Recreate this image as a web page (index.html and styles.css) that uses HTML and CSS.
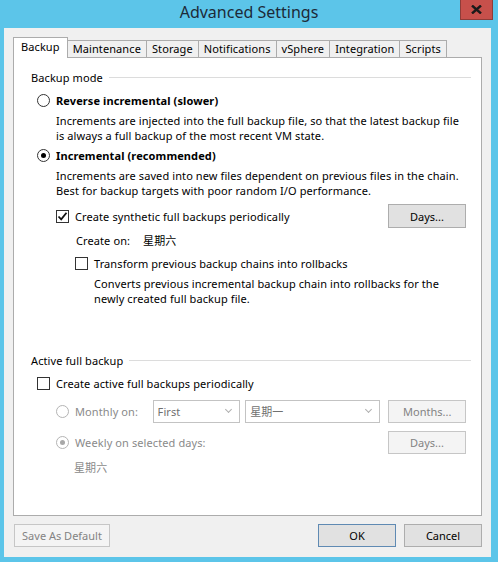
FILE: index.html
```html
<!DOCTYPE html>
<html lang="en">
<head>
  <meta charset="UTF-8" />
  <title>Advanced Settings</title>
  <link rel="stylesheet" href="styles.css">
</head>
<body>
  <div class="window">
    <div class="titlebar">
      <div class="title">Advanced Settings</div>
      <div class="close">
        <svg width="11" height="9" viewBox="0 0 11 9"><path d="M1 0.5 L10 8.5 M10 0.5 L1 8.5" stroke="#1a1a1a" stroke-width="2.4"/></svg>
      </div>
    </div>

    <div class="client">
      <div class="tabs">
        <div class="tab active">Backup</div>
        <div class="tab">Maintenance</div>
        <div class="tab">Storage</div>
        <div class="tab">Notifications</div>
        <div class="tab">vSphere</div>
        <div class="tab">Integration</div>
        <div class="tab">Scripts</div>
      </div>

      <div class="panel">
        <div class="legend"><span>Backup mode</span><i></i></div>
        <div class="group">
          <div class="opt strong first"><span class="radio"></span>Reverse incremental (slower)</div>
          <p class="desc">Increments are injected into the full backup file, so that the latest backup file<br>is always a full backup of the most recent VM state.</p>

          <div class="opt strong"><span class="radio checked"></span>Incremental (recommended)</div>
          <p class="desc">Increments are saved into new files dependent on previous files in the chain.<br>Best for backup targets with poor random I/O performance.</p>

          <div class="sub">
            <div class="opt btn-row">
              <span class="check checked">
                <svg width="11" height="11" viewBox="0 0 11 11"><path d="M1.5 5.5 L4.2 8.3 L9.5 1.8" fill="none" stroke="#111" stroke-width="1.8"/></svg>
              </span>
              <span class="grow">Create synthetic full backups periodically</span>
              <button class="btn">Days...</button>
            </div>
            <div class="create-on"><span>Create on:</span><span class="day">星期六</span></div>

            <div class="sub">
              <div class="opt second"><span class="check"></span>Transform previous backup chains into rollbacks</div>
              <p class="desc">Converts previous incremental backup chain into rollbacks for the<br>newly created full backup file.</p>
            </div>
          </div>
        </div>

        <div class="legend active-full"><span>Active full backup</span><i></i></div>
        <div class="group">
          <div class="opt first-check"><span class="check"></span>Create active full backups periodically</div>
          <div class="sub disabled">
            <div class="opt ctl-row monthly">
              <span class="radio"></span>
              <span class="lbl">Monthly on:</span>
              <div class="select sel-first">First<span class="chev"></span></div>
              <div class="select sel-day">星期一<span class="chev"></span></div>
              <button class="btn" disabled>Months...</button>
            </div>
            <div class="opt ctl-row weekly">
              <span class="radio checked"></span>
              <span class="grow">Weekly on selected days:</span>
              <button class="btn" disabled>Days...</button>
            </div>
            <div class="days-list">星期六</div>
          </div>
        </div>
      </div>

      <div class="footer">
        <button class="btn wide" disabled>Save As Default</button>
        <span class="grow"></span>
        <button class="btn default">OK</button>
        <button class="btn">Cancel</button>
      </div>
    </div>
  </div>
</body>
</html>
```

FILE: styles.css
```css
body {
  margin: 0;
  font-family: "Noto Sans", "Noto Sans CJK SC", sans-serif;
  font-size: 11px;
  letter-spacing: 0.1px;
  color: #000;
}
.window {
  height: 562px;
  background: #5cc5e9;
  display: flex;
  flex-direction: column;
}
.titlebar {
  height: 28px;
  position: relative;
  display: flex;
  justify-content: center;
}
.title {
  font-size: 16px;
  line-height: 22px;
  padding-top: 1px;
  letter-spacing: 0;
  color: #1c2a38;
}
.close {
  position: absolute;
  top: 0;
  right: 5px;
  width: 31px;
  height: 19px;
  background: #c7504b;
  border: 1px solid #8e3c38;
  border-top: none;
  display: flex;
  align-items: center;
  justify-content: center;
}
.client {
  flex: 1;
  margin: 0 7px 5px 4px;
  background: #f0f0f0;
  padding: 9px 9px 10px;
  display: flex;
  flex-direction: column;
}
.tabs {
  display: flex;
  align-items: flex-end;
  height: 21px;
  margin-bottom: -1px;
  position: relative;
  z-index: 1;
}
.tab {
  height: 16px;
  line-height: 16px;
  padding: 0 5px;
  margin-bottom: 1px;
  margin-left: -1px;
  background: #f0f0f0;
  border: 1px solid #acacac;
  border-bottom: none;
}
.tab.active {
  height: 20px;
  line-height: 18px;
  padding: 0 7px;
  margin: 0;
  background: #fff;
}
.panel {
  flex: 1;
  background: #fff;
  border: 1px solid #acacac;
  padding: 12px 10px 0 17px;
}
.legend {
  display: flex;
  align-items: center;
  height: 15px;
}
.legend i {
  flex: 1;
  border-top: 1px solid #dcdcdc;
  margin-left: 6px;
}
.legend.active-full {
  margin-top: 47px;
}
.group {
  padding-left: 6px;
}
.opt {
  display: flex;
  align-items: center;
  height: 15px;
  line-height: 15px;
  margin-top: 5px;
}
.opt.first {
  margin-top: 8px;
}
.strong {
  font-weight: bold;
}
.desc {
  margin: 5px 0 0 19px;
  line-height: 15px;
}
.sub {
  padding-left: 19px;
}
.radio {
  width: 11px;
  height: 11px;
  border: 1px solid #333;
  border-radius: 50%;
  margin-right: 6px;
  display: flex;
  align-items: center;
  justify-content: center;
  flex: none;
}
.radio.checked::after {
  content: "";
  width: 5px;
  height: 5px;
  border-radius: 50%;
  background: #000;
}
.check {
  width: 11px;
  height: 11px;
  border: 1px solid #333;
  margin-right: 6px;
  display: flex;
  align-items: center;
  justify-content: center;
  flex: none;
  background: #fff;
}
.grow {
  flex: 1;
}
.btn-row {
  height: 24px;
  margin-top: 6px;
  padding-right: 5px;
}
.btn {
  font: inherit;
  width: 78px;
  height: 24px;
  padding: 0;
  background: #e1e1e1;
  border: 1px solid #adadad;
  color: #000;
}
.btn:disabled {
  background: #f4f4f4;
  border-color: #c6c6c6;
  color: #838383;
}
.create-on {
  display: flex;
  height: 15px;
  line-height: 15px;
  margin: 5px 0 0 20px;
}
.create-on .day {
  margin-left: 13px;
}
.second {
  margin-top: 8px;
}
.first-check {
  margin-top: 8px;
}
.disabled {
  color: #8a8a8a;
}
.disabled .radio {
  border-color: #b4b4b4;
}
.disabled .radio.checked::after {
  background: #a8a8a8;
}
.ctl-row {
  height: 23px;
  padding-right: 5px;
}
.ctl-row .btn {
  height: 23px;
}
.monthly {
  margin-top: 9px;
}
.weekly {
  margin-top: 8px;
}
.lbl {
  width: 78px;
}
.select {
  height: 21px;
  line-height: 21px;
  border: 1px solid #c3c3c3;
  background: #fff;
  padding-left: 4px;
  position: relative;
  color: #707070;
  margin-right: 5px;
}
.sel-first {
  width: 82px;
}
.sel-day {
  width: 130px;
  margin-right: 8px;
}
.chev {
  position: absolute;
  right: 8px;
  top: 6px;
  width: 4px;
  height: 4px;
  border-right: 1px solid #b0b0b0;
  border-bottom: 1px solid #b0b0b0;
  transform: rotate(45deg);
}
.days-list {
  margin: 6px 0 0 18px;
  line-height: 15px;
}
.footer {
  display: flex;
  margin-top: 8px;
  padding-left: 1px;
  gap: 8px;
}
.footer .btn {
  height: 23px;
}
.btn.wide {
  width: 96px;
}
.btn.default {
  border-color: #5f8ab3;
}
```
